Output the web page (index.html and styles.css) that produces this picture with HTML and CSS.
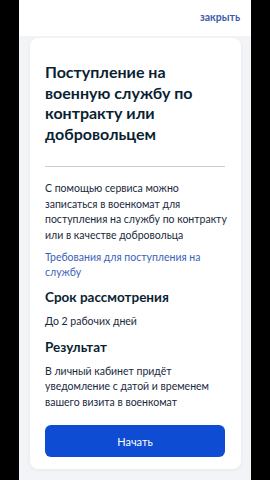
FILE: index.html
```html
<!DOCTYPE html>
<html lang="ru">
<head>
<meta charset="utf-8">
<link rel="stylesheet" href="styles.css">
</head>
<body>
<div class="screen">
  <div class="topbar"><a class="close">закрыть</a></div>
  <div class="card">
    <h1 class="title">Поступление на военную службу по контракту или добровольцем</h1>
    <hr class="divider">
    <p class="text">С помощью сервиса можно записаться в военкомат для поступления на службу по контракту или в качестве добровольца</p>
    <a class="link">Требования для поступления на службу</a>
    <h2 class="subtitle">Срок рассмотрения</h2>
    <p class="text">До 2 рабочих дней</p>
    <h2 class="subtitle">Результат</h2>
    <p class="text">В личный кабинет придёт уведомление с датой и временем вашего визита в военкомат</p>
    <button class="btn">Начать</button>
  </div>
</div>
</body>
</html>
```
FILE: styles.css
```css
html, body {
  margin: 0;
  padding: 0;
  background: #000;
  height: 480px;
  overflow: hidden;
}
.screen {
  width: 232px;
  height: 480px;
  margin-left: 19px;
  background: #f3f4f7;
  font-family: Lato, "Noto Sans", sans-serif;
  color: #0b1f33;
  box-sizing: border-box;
}
.topbar {
  height: 36px;
  display: flex;
  justify-content: flex-end;
  align-items: flex-start;
  padding: 11px 11px 0 0;
  box-sizing: border-box;
  background: #fff;
}
.close {
  font-size: 10.5px;
  font-weight: 700;
  color: #3d5ca8;
}
.card {
  margin: 2px 10px 0 11px;
  background: #fff;
  border-radius: 8px;
  padding: 24px 14px 12px 15px;
  box-shadow: 0 1px 4px rgba(0, 20, 60, 0.06);
}
.title {
  margin: 0;
  font-size: 16px;
  line-height: 20.5px;
  font-weight: 700;
  color: #0b1f33;
}
.divider {
  border: 0;
  height: 1px;
  background: #c9ccd9;
  margin: 22px 2px 14px 0;
}
.text {
  margin: 0;
  font-size: 10.5px;
  line-height: 15.6px;
  color: #1a2a3d;
}
.link {
  display: block;
  margin-top: 7px;
  font-size: 10.5px;
  line-height: 14.8px;
  color: #3b62b8;
}
.subtitle {
  margin: 8px 0 8px;
  font-size: 13.5px;
  line-height: 18px;
  font-weight: 700;
  color: #0b1f33;
}
.btn {
  display: block;
  width: 180px;
  height: 32px;
  margin-top: 15px;
  border: 0;
  border-radius: 6px;
  background: #0d4cd3;
  color: #fff;
  font-family: Lato, "Noto Sans", sans-serif;
  font-size: 11px;
}
```
